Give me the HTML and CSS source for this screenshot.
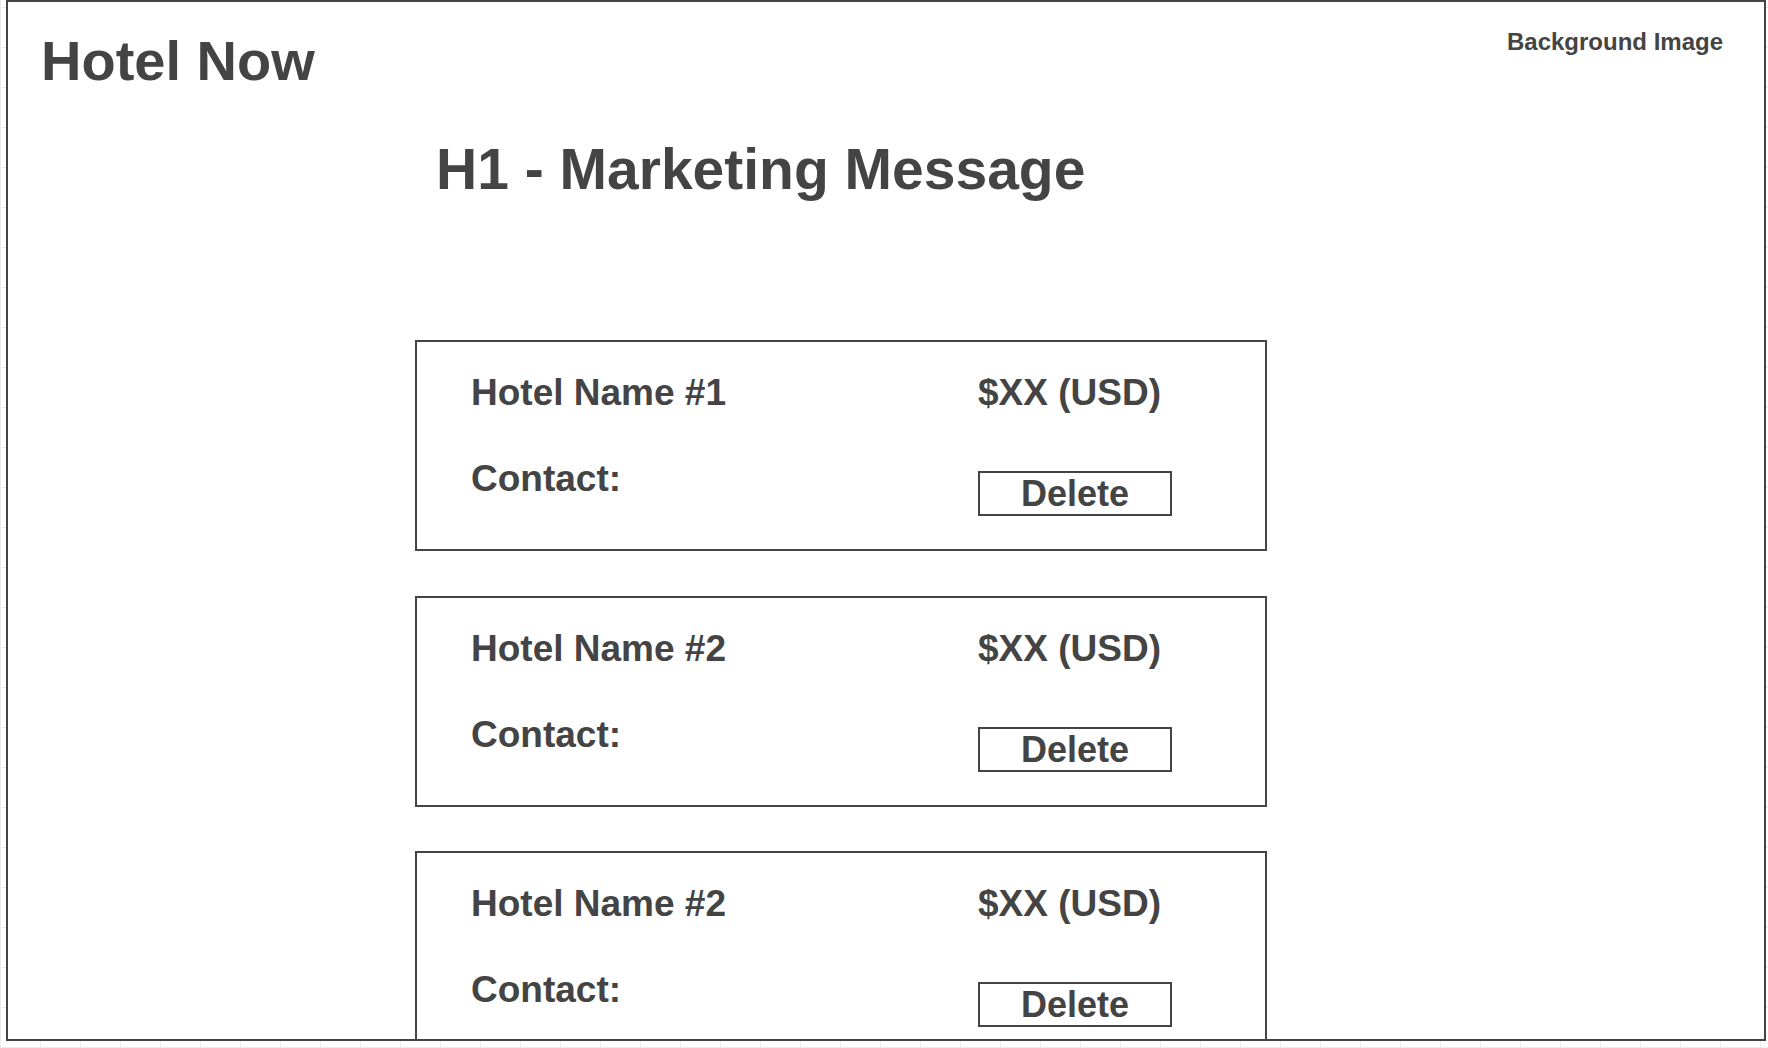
FILE: index.html
```html
<!DOCTYPE html>
<html lang="en">
<head>
    <meta charset="UTF-8">
    <meta name="viewport" content="width=device-width, initial-scale=1.0">
    <title>Hotel Now</title>
    <link rel="stylesheet" href="styles.css">
</head>
<body>

<div class="frame">
    <div class="topbar">
        <h1 class="brand">Hotel Now</h1>
        <span class="bg-label">Background Image</span>
    </div>

    <h2 class="marketing">H1 - Marketing Message</h2>

    <div class="hotel-list">
        <div class="hotel-card">
            <span class="hotel-name">Hotel Name #1</span>
            <span class="hotel-price">$XX (USD)</span>
            <span class="hotel-contact">Contact:</span>
            <button class="delete-btn">Delete</button>
        </div>

        <div class="hotel-card">
            <span class="hotel-name">Hotel Name #2</span>
            <span class="hotel-price">$XX (USD)</span>
            <span class="hotel-contact">Contact:</span>
            <button class="delete-btn">Delete</button>
        </div>

        <div class="hotel-card">
            <span class="hotel-name">Hotel Name #2</span>
            <span class="hotel-price">$XX (USD)</span>
            <span class="hotel-contact">Contact:</span>
            <button class="delete-btn">Delete</button>
        </div>
    </div>
</div>

</body>
</html>
```

FILE: styles.css
```css
body {
    font-family: "Liberation Sans", Arial, sans-serif;
    font-weight: bold;
    color: #444;
    margin: 0;
    background-color: #fff;
    background-image:
        repeating-linear-gradient(90deg, #ececec 0 1px, transparent 1px 40px),
        repeating-linear-gradient(0deg, #ececec 0 1px, transparent 1px 40px);
}
.frame {
    box-sizing: border-box;
    width: 1760px;
    height: 1041px;
    margin: 0 2px 7px 6px;
    border: 2px solid #444;
    background-color: #fff;
    overflow: hidden;
}
.topbar {
    display: flex;
    justify-content: space-between;
    align-items: flex-start;
    padding: 0 41px 0 33px;
}
.brand {
    margin: 31px 0 0 0;
    font-size: 56px;
    line-height: 56px;
}
.bg-label {
    margin-top: 28px;
    font-size: 24px;
    line-height: 24px;
}
.marketing {
    margin: 52px 0 0 428px;
    font-size: 57px;
    line-height: 57px;
}
.hotel-list {
    display: flex;
    flex-direction: column;
    gap: 45px;
    width: 852px;
    margin: 142px 0 0 407px;
}
.hotel-card {
    box-sizing: border-box;
    flex-shrink: 0;
    height: 211px;
    border: 2px solid #444;
    padding: 32px 0 0 54px;
    display: grid;
    grid-template-columns: 507px auto;
    align-content: start;
    row-gap: 49px;
    align-items: start;
    justify-items: start;
    font-size: 37px;
    line-height: 37px;
}
.hotel-card:last-child {
    margin-top: -1px;
}
.delete-btn {
    box-sizing: border-box;
    width: 194px;
    height: 45px;
    margin-top: 11px;
    padding: 0;
    border: 2px solid #444;
    background-color: #fff;
    font-family: inherit;
    font-weight: bold;
    font-size: 36px;
    line-height: 36px;
    color: #444;
}
```
